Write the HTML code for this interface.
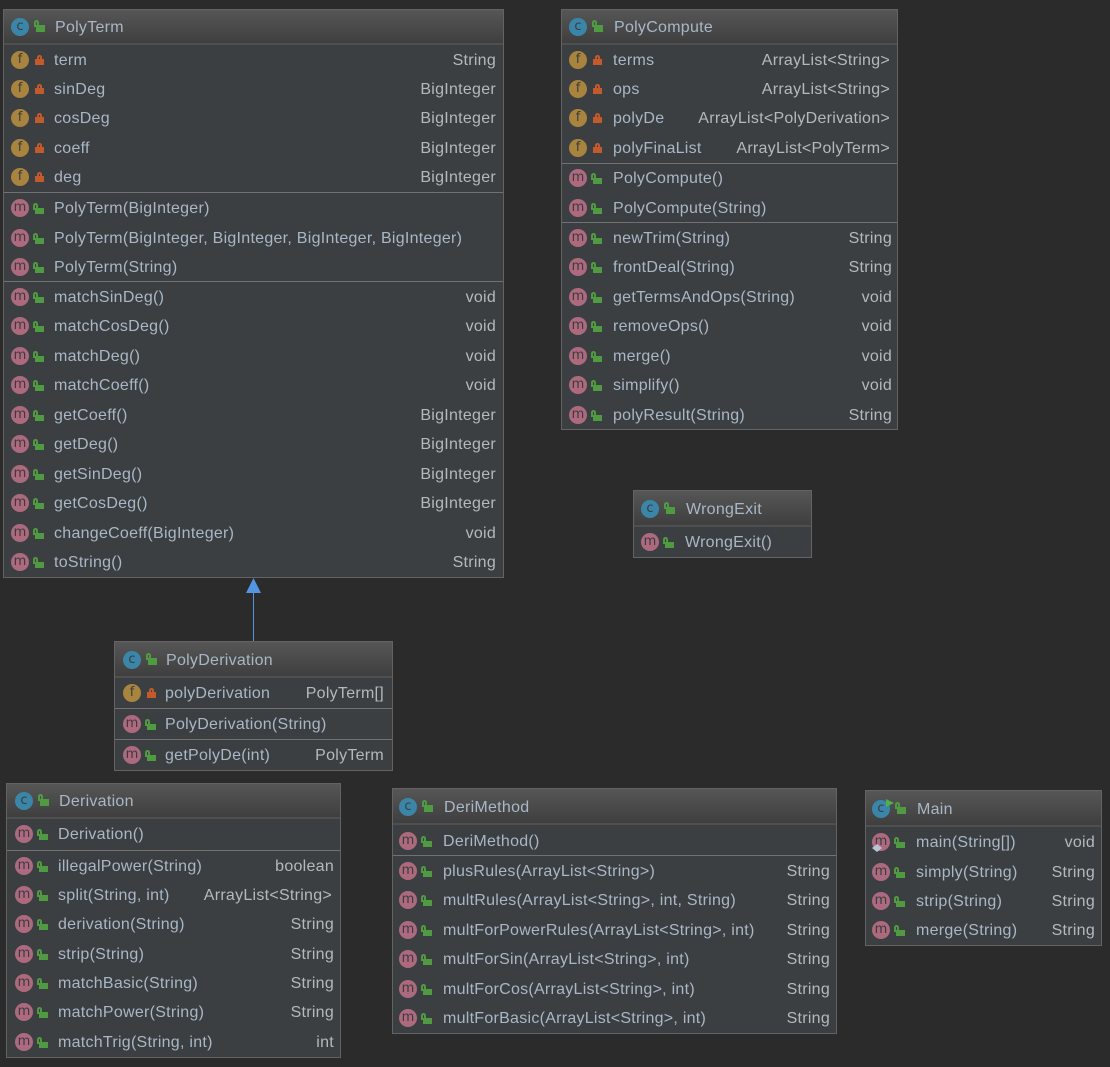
<!DOCTYPE html>
<html><head><meta charset="utf-8"><style>
html,body{margin:0;padding:0;background:#2b2b2b;width:1110px;height:1067px;overflow:hidden}
body{position:relative;font-family:"Liberation Sans",sans-serif;font-size:16px;letter-spacing:.27px;color:#a9b7c6}
.b{position:absolute;box-sizing:border-box;border:1px solid #636363;background:#3c3f41}
.h{position:absolute;left:0;right:0;top:0;background:linear-gradient(#565656,#3f3f3f);border-bottom:2px solid #4f4f4f}
.s{position:absolute;left:0;right:0;height:1px;background:#6f7173}
.r{position:absolute;left:0;right:0;height:20px;line-height:22px;margin-top:-10px;white-space:nowrap}
.r i{position:absolute;left:calc(var(--a) - 10px);top:1px;width:18px;height:18px;border-radius:50%;font:normal 13px/17px "DejaVu Sans",sans-serif;letter-spacing:0;text-align:center;color:#3a3c3e}
.f{background:#a8843f}.m{background:#ad6a7f}.c{background:#3b86a8}
.r u{position:absolute;left:calc(var(--b) - 5px);top:9px;width:9px;height:6px;background:#c25a2c;text-decoration:none}
.r u:before{content:"";position:absolute;left:2px;top:-4px;width:1px;height:4px;border:2px solid #c25a2c;border-bottom:0;border-radius:3px 3px 0 0}
.r u.o{background:#509a42;top:10px}
.r u.o:before{left:-2px;top:-5px;width:1px;height:5px;border-color:#509a42;border-bottom:0}
.t u.o{left:calc(var(--b) - 4px);top:8px;height:7px}
.r span{position:absolute;left:var(--c)}
.r em{position:absolute;right:var(--e,6px);font-style:normal;color:#b3b9bf}
.t span{left:calc(var(--c) + 1px);color:#a9b7c6}
</style></head><body>

<svg style="position:absolute;left:240px;top:570px" width="30" height="75"><rect x="13" y="20" width="1" height="51" fill="#5395e0"/><polygon points="13.5,8 21,23 6,23" fill="#5395e0"/></svg>

<div class="b" style="left:3px;top:9px;width:501px;height:569px;--a:17px;--b:36px;--c:50px;--e:7px">
<div class="h" style="height:33px"></div>
<div class="s" style="top:182px"></div><div class="s" style="top:271px"></div>
<div class="r t" style="top:17px"><i class="c">c</i><u class="o"></u><span>PolyTerm</span></div>
<div class="r" style="top:50px"><i class="f">f</i><u></u><span>term</span><em>String</em></div>
<div class="r" style="top:79px"><i class="f">f</i><u></u><span>sinDeg</span><em>BigInteger</em></div>
<div class="r" style="top:108px"><i class="f">f</i><u></u><span>cosDeg</span><em>BigInteger</em></div>
<div class="r" style="top:138px"><i class="f">f</i><u></u><span>coeff</span><em>BigInteger</em></div>
<div class="r" style="top:167px"><i class="f">f</i><u></u><span>deg</span><em>BigInteger</em></div>
<div class="r" style="top:198px"><i class="m">m</i><u class="o"></u><span>PolyTerm(BigInteger)</span></div>
<div class="r" style="top:228px"><i class="m">m</i><u class="o"></u><span>PolyTerm(BigInteger, BigInteger, BigInteger, BigInteger)</span></div>
<div class="r" style="top:257px"><i class="m">m</i><u class="o"></u><span>PolyTerm(String)</span></div>
<div class="r" style="top:287px"><i class="m">m</i><u class="o"></u><span>matchSinDeg()</span><em>void</em></div>
<div class="r" style="top:316px"><i class="m">m</i><u class="o"></u><span>matchCosDeg()</span><em>void</em></div>
<div class="r" style="top:346px"><i class="m">m</i><u class="o"></u><span>matchDeg()</span><em>void</em></div>
<div class="r" style="top:375px"><i class="m">m</i><u class="o"></u><span>matchCoeff()</span><em>void</em></div>
<div class="r" style="top:405px"><i class="m">m</i><u class="o"></u><span>getCoeff()</span><em>BigInteger</em></div>
<div class="r" style="top:434px"><i class="m">m</i><u class="o"></u><span>getDeg()</span><em>BigInteger</em></div>
<div class="r" style="top:464px"><i class="m">m</i><u class="o"></u><span>getSinDeg()</span><em>BigInteger</em></div>
<div class="r" style="top:493px"><i class="m">m</i><u class="o"></u><span>getCosDeg()</span><em>BigInteger</em></div>
<div class="r" style="top:523px"><i class="m">m</i><u class="o"></u><span>changeCoeff(BigInteger)</span><em>void</em></div>
<div class="r" style="top:552px"><i class="m">m</i><u class="o"></u><span>toString()</span><em>String</em></div>
</div>

<div class="b" style="left:561px;top:9px;width:337px;height:421px;--a:17px;--b:36px;--c:51px;--e:5px">
<div class="h" style="height:33px"></div>
<div class="s" style="top:153px"></div><div class="s" style="top:212px"></div>
<div class="r t" style="top:17px"><i class="c">c</i><u class="o"></u><span>PolyCompute</span></div>
<div class="r" style="top:50px;--e:7px"><i class="f">f</i><u></u><span>terms</span><em>ArrayList&lt;String&gt;</em></div>
<div class="r" style="top:79px;--e:7px"><i class="f">f</i><u></u><span>ops</span><em>ArrayList&lt;String&gt;</em></div>
<div class="r" style="top:108px;--e:7px"><i class="f">f</i><u></u><span>polyDe</span><em>ArrayList&lt;PolyDerivation&gt;</em></div>
<div class="r" style="top:138px;--e:7px"><i class="f">f</i><u></u><span>polyFinaList</span><em>ArrayList&lt;PolyTerm&gt;</em></div>
<div class="r" style="top:168px"><i class="m">m</i><u class="o"></u><span>PolyCompute()</span></div>
<div class="r" style="top:198px"><i class="m">m</i><u class="o"></u><span>PolyCompute(String)</span></div>
<div class="r" style="top:228px"><i class="m">m</i><u class="o"></u><span>newTrim(String)</span><em>String</em></div>
<div class="r" style="top:257px"><i class="m">m</i><u class="o"></u><span>frontDeal(String)</span><em>String</em></div>
<div class="r" style="top:287px"><i class="m">m</i><u class="o"></u><span>getTermsAndOps(String)</span><em>void</em></div>
<div class="r" style="top:316px"><i class="m">m</i><u class="o"></u><span>removeOps()</span><em>void</em></div>
<div class="r" style="top:346px"><i class="m">m</i><u class="o"></u><span>merge()</span><em>void</em></div>
<div class="r" style="top:375px"><i class="m">m</i><u class="o"></u><span>simplify()</span><em>void</em></div>
<div class="r" style="top:405px"><i class="m">m</i><u class="o"></u><span>polyResult(String)</span><em>String</em></div>
</div>

<div class="b" style="left:633px;top:490px;width:179px;height:68px;--a:17px;--b:36px;--c:51px;">
<div class="h" style="height:34px"></div>
<div class="r t" style="top:18px"><i class="c">c</i><u class="o"></u><span>WrongExit</span></div>
<div class="r" style="top:51px"><i class="m">m</i><u class="o"></u><span>WrongExit()</span></div>
</div>

<div class="b" style="left:114px;top:641px;width:279px;height:130px;--a:18px;--b:37px;--c:50px;--e:8px">
<div class="h" style="height:34px"></div>
<div class="s" style="top:66px"></div><div class="s" style="top:97px"></div>
<div class="r t" style="top:18px"><i class="c">c</i><u class="o"></u><span>PolyDerivation</span></div>
<div class="r" style="top:51px"><i class="f">f</i><u></u><span>polyDerivation</span><em>PolyTerm[]</em></div>
<div class="r" style="top:82px"><i class="m">m</i><u class="o"></u><span>PolyDerivation(String)</span></div>
<div class="r" style="top:113px"><i class="m">m</i><u class="o"></u><span>getPolyDe(int)</span><em>PolyTerm</em></div>
</div>

<div class="b" style="left:6px;top:783px;width:335px;height:275px;--a:18px;--b:37px;--c:51px;">
<div class="h" style="height:33px"></div>
<div class="s" style="top:66px"></div>
<div class="r t" style="top:17px"><i class="c">c</i><u class="o"></u><span>Derivation</span></div>
<div class="r" style="top:50px"><i class="m">m</i><u class="o"></u><span>Derivation()</span></div>
<div class="r" style="top:82px"><i class="m">m</i><u class="o"></u><span>illegalPower(String)</span><em>boolean</em></div>
<div class="r" style="top:111px"><i class="m">m</i><u class="o"></u><span>split(String, int)</span><em style="right:8px">ArrayList&lt;String&gt;</em></div>
<div class="r" style="top:140px"><i class="m">m</i><u class="o"></u><span>derivation(String)</span><em>String</em></div>
<div class="r" style="top:170px"><i class="m">m</i><u class="o"></u><span>strip(String)</span><em>String</em></div>
<div class="r" style="top:199px"><i class="m">m</i><u class="o"></u><span>matchBasic(String)</span><em>String</em></div>
<div class="r" style="top:228px"><i class="m">m</i><u class="o"></u><span>matchPower(String)</span><em>String</em></div>
<div class="r" style="top:258px"><i class="m">m</i><u class="o"></u><span>matchTrig(String, int)</span><em>int</em></div>
</div>

<div class="b" style="left:392px;top:788px;width:445px;height:246px;--a:16px;--b:35px;--c:50px;">
<div class="h" style="height:34px"></div>
<div class="s" style="top:66px"></div>
<div class="r t" style="top:18px"><i class="c">c</i><u class="o"></u><span>DeriMethod</span></div>
<div class="r" style="top:52px"><i class="m">m</i><u class="o"></u><span>DeriMethod()</span></div>
<div class="r" style="top:82px"><i class="m">m</i><u class="o"></u><span>plusRules(ArrayList&lt;String&gt;)</span><em>String</em></div>
<div class="r" style="top:111px"><i class="m">m</i><u class="o"></u><span>multRules(ArrayList&lt;String&gt;, int, String)</span><em>String</em></div>
<div class="r" style="top:141px"><i class="m">m</i><u class="o"></u><span>multForPowerRules(ArrayList&lt;String&gt;, int)</span><em>String</em></div>
<div class="r" style="top:170px"><i class="m">m</i><u class="o"></u><span>multForSin(ArrayList&lt;String&gt;, int)</span><em>String</em></div>
<div class="r" style="top:200px"><i class="m">m</i><u class="o"></u><span>multForCos(ArrayList&lt;String&gt;, int)</span><em>String</em></div>
<div class="r" style="top:229px"><i class="m">m</i><u class="o"></u><span>multForBasic(ArrayList&lt;String&gt;, int)</span><em>String</em></div>
</div>

<div class="b" style="left:865px;top:790px;width:237px;height:156px;--a:16px;--b:35px;--c:50px;">
<div class="h" style="height:34px"></div>
<div class="r t" style="top:18px"><i class="c">c</i><u class="o"></u><span>Main</span></div>
<svg style="position:absolute;left:19px;top:7px" width="10" height="12"><polygon points="1,1 9,5 1,9" fill="#4fb04a"/></svg>
<div class="r" style="top:51px"><i class="m">m</i><u class="o"></u><span>main(String[])</span><em>void</em></div>
<svg style="position:absolute;left:5px;top:52px" width="12" height="10"><polygon points="1,5 6,1 11,5 6,9" fill="#b9c4d0"/></svg>
<div class="r" style="top:81px"><i class="m">m</i><u class="o"></u><span>simply(String)</span><em>String</em></div>
<div class="r" style="top:110px"><i class="m">m</i><u class="o"></u><span>strip(String)</span><em>String</em></div>
<div class="r" style="top:139px"><i class="m">m</i><u class="o"></u><span>merge(String)</span><em>String</em></div>
</div>

</body></html>
